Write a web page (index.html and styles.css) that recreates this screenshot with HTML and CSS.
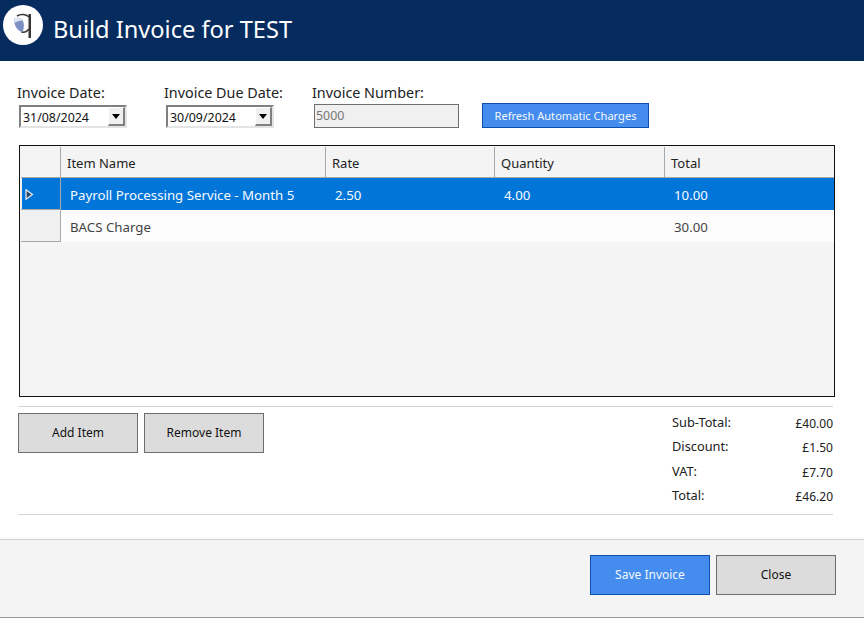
FILE: index.html
```html
<!DOCTYPE html>
<html lang="en">
<head>
<meta charset="utf-8">
<title>Build Invoice for TEST</title>
<link rel="stylesheet" href="styles.css">
</head>
<body>
<div class="app">
  <header class="header">
    <svg class="logo" width="40" height="40" viewBox="0 0 40 40" aria-hidden="true">
      <circle cx="20" cy="20" r="20" fill="#fff"/>
      <path d="M11 13.500 C14 12 18 13 20 16 C21.500 19 21 24 19.500 27 C14.500 26 11 21 11 13.500Z" fill="#7c90c4"/>
      <path d="M11 13.500 C14 12 17.500 13 19.500 15.500 C16.500 15.500 13.500 16.500 11.500 18Z" fill="#dfe5f3"/>
      <path d="M14 11 C18 8.500 23 9 26 12" fill="none" stroke="#3a3735" stroke-width="1.500"/>
      <path d="M18.500 27 C21.500 27.800 24 26.500 26 24" fill="none" stroke="#3a3735" stroke-width="1.500"/>
      <rect x="25.500" y="9" width="2.500" height="24" fill="#3a3735"/>
    </svg>
    <h1 class="title">Build Invoice for TEST</h1>
  </header>

  <main class="main">
    <section class="fields">
      <div class="field field-date">
        <label class="label">Invoice Date:</label>
        <div class="combo"><span class="combo-value">31/08/2024</span><span class="combo-btn"><span class="arrow"></span></span></div>
      </div>
      <div class="field field-date">
        <label class="label">Invoice Due Date:</label>
        <div class="combo"><span class="combo-value">30/09/2024</span><span class="combo-btn"><span class="arrow"></span></span></div>
      </div>
      <div class="field field-number">
        <label class="label">Invoice Number:</label>
        <div class="readonly">5000</div>
      </div>
      <button class="btn btn-primary btn-refresh" type="button">Refresh Automatic Charges</button>
    </section>

    <section class="grid">
      <div class="row row-head">
        <div class="cell corner"></div>
        <div class="cell col-head">Item Name</div>
        <div class="cell col-head">Rate</div>
        <div class="cell col-head">Quantity</div>
        <div class="cell col-head col-last">Total</div>
      </div>
      <div class="row row-selected">
        <div class="cell row-marker marker-current">
          <svg width="9" height="11" viewBox="0 0 9 11" aria-hidden="true"><path d="M1 0.800 L7.500 5.500 L1 10.200Z" fill="#2f4a68" stroke="#e8eef4" stroke-width="1.200"/></svg>
        </div>
        <div class="cell data">Payroll Processing Service - Month 5</div>
        <div class="cell data">2.50</div>
        <div class="cell data">4.00</div>
        <div class="cell data">10.00</div>
      </div>
      <div class="row row-plain">
        <div class="cell row-marker"></div>
        <div class="cell data">BACS Charge</div>
        <div class="cell data"></div>
        <div class="cell data"></div>
        <div class="cell data">30.00</div>
      </div>
    </section>

    <section class="summary">
      <div class="actions">
        <button class="btn btn-grey" type="button">Add Item</button>
        <button class="btn btn-grey" type="button">Remove Item</button>
      </div>
      <dl class="totals">
        <div class="total-row"><dt>Sub-Total:</dt><dd>£40.00</dd></div>
        <div class="total-row"><dt>Discount:</dt><dd>£1.50</dd></div>
        <div class="total-row"><dt>VAT:</dt><dd>£7.70</dd></div>
        <div class="total-row"><dt>Total:</dt><dd>£46.20</dd></div>
      </dl>
    </section>
  </main>

  <footer class="footer">
    <button class="btn btn-primary" type="button">Save Invoice</button>
    <button class="btn btn-grey" type="button">Close</button>
  </footer>
</div>
</body>
</html>
```

FILE: styles.css
```css
* { box-sizing: border-box; }
html, body { margin: 0; padding: 0; }
body {
  width: 864px;
  height: 618px;
  overflow: hidden;
  background: #fff;
  font-family: "Noto Sans", "Open Sans", sans-serif;
  color: #1a1a1a;
}
.app { display: flex; flex-direction: column; height: 618px; }

.header {
  flex: none;
  height: 61px;
  background: #062c5f;
  display: flex;
  align-items: flex-start;
  padding: 5px 0 0 3px;
  gap: 10px;
}
.logo { flex: none; }
.title {
  margin: 6px 0 0;
  font-size: 23.600px;
  line-height: 36px;
  font-weight: 400;
  color: #fff;
}

.main { flex: 1; padding: 0 31px 0 18px; min-height: 0; }

.fields { display: flex; align-items: flex-start; height: 84px; padding-top: 22px; margin-left: -1px; }
.field { flex: none; }
.field-date { width: 147.500px; }
.field-date + .field-date { width: 148px; }
.field-date:first-child { width: 147px; }
.field-number { width: 170px; }
.label { display: block; font-size: 14.350px; line-height: 20px; color: #222; white-space: nowrap; }
.combo {
  margin: 2px 0 0 2px;
  width: 108px;
  height: 23px;
  display: flex;
  border: 2px solid #808080;
  border-right-color: #e4e4e4;
  border-bottom-color: #e4e4e4;
  background: #fff;
}
.combo-value { flex: 1; font-size: 12.400px; line-height: 21px; padding-left: 2px; color: #111; }
.combo-btn {
  width: 17px;
  height: 19px;
  background: #f0f0f0;
  border-right: 2px solid #808080;
  border-bottom: 2px solid #808080;
  border-top: 1px solid #fff;
  border-left: 1px solid #fff;
  display: flex;
  align-items: center;
  justify-content: center;
}
.arrow { width: 0; height: 0; border: 4px solid transparent; border-top: 5px solid #000; border-bottom: 0; }
.readonly {
  margin: 1px 0 0 2px;
  width: 145px;
  height: 24px;
  border: 1px solid #6e6e6e;
  background: #f0f0f0;
  color: #777;
  font-size: 12.400px;
  line-height: 22px;
  padding-left: 1px;
}

.btn {
  flex: none;
  width: 120px;
  height: 40px;
  padding: 0 0 2px;
  font-family: inherit;
  font-size: 12px;
  border: 1px solid #6e6e6e;
  background: #dcdcdc;
  color: #111;
}
.btn-primary { background: #448ced; border-color: #0c50ac; color: #f4f8ff; }
.btn-refresh { width: 167px; height: 25px; margin: 20px 0 0; font-size: 11.100px; padding: 0; }

.grid {
  height: 252px;
  margin-left: 1px;
  margin-right: -2px;
  border: 1px solid #111;
  padding: 1px 0 1px 1px;
  background: #f4f4f4;
}
.row { display: grid; grid-template-columns: 40px 265px 169px 170px 1fr; height: 32px; }
.row-head { height: 31px; color: #222; }
.cell { font-size: 13px; line-height: 30px; white-space: nowrap; overflow: hidden; }
.corner, .col-head {
  background: #f4f4f4;
  border-right: 1px solid #a8a8a8;
  border-bottom: 1px solid #a8a8a8;
}
.col-head { padding: 1px 0 0 6px; }
.col-last { border-right: 0; }
.data { padding: 1px 0 0 9px; line-height: 32px; font-size: 13.250px; }
.row-selected { background: #0275d8; color: #f6fbff; }
.row-plain { background: #fcfcfc; color: #444; }
.row-marker {
  background: #f0f0f0;
  border: 1px solid #a8a8a8;
  border-top: 0;
  border-left: 0;
  padding: 11px 0 0 3px;
  line-height: 0;
}
.marker-current { background: #0275d8; box-shadow: inset 1px 0 0 #f0f0f0; padding-left: 4px; }

.summary {
  margin-top: 9px;
  border-top: 1px solid #d4d4d4;
  height: 109px;
  display: flex;
  justify-content: space-between;
  border-bottom: 1px solid #d4d4d4;
}
.actions { display: flex; gap: 6px; padding-top: 6px; }
.totals { margin: 2.500px 0 0; width: 161px; }
.total-row { display: flex; justify-content: space-between; height: 24.500px; font-size: 12px; line-height: 24px; color: #222; }
.total-row dt { margin: 0; font-size: 12.800px; }
.total-row dd { margin: 0; padding-top: 2px; }

.footer {
  flex: none;
  height: 79px;
  background: #f4f4f4;
  border-top: 1px solid #d0d0d0;
  border-bottom: 1px solid #999;
  box-shadow: 0 -2px 0 #fafafa;
  display: flex;
  justify-content: flex-end;
  gap: 6px;
  padding: 15px 28px 0 0;
}
```
